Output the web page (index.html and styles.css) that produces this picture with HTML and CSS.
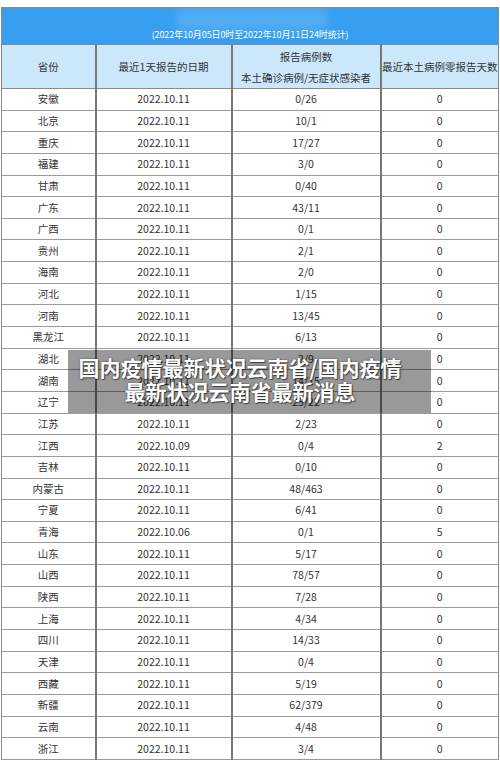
FILE: index.html
```html
<!DOCTYPE html>
<html lang="zh-CN">
<head>
<meta charset="utf-8">
<title>国内疫情最新状况云南省</title>
<link rel="stylesheet" href="styles.css">
</head>
<body>
<div class="page">
  <table class="stats">
    <colgroup>
      <col class="c1"><col class="c2"><col class="c3"><col class="c4">
    </colgroup>
    <thead>
      <tr class="title-row">
        <th colspan="4"><span class="glow"></span><span class="period">(2022年10月05日0时至2022年10月11日24时统计)</span></th>
      </tr>
      <tr class="head-row">
        <th>省份</th>
        <th>最近1天报告的日期</th>
        <th><div class="two"><span>报告病例数</span><span>本土确诊病例/无症状感染者</span></div></th>
        <th>最近本土病例零报告天数</th>
      </tr>
    </thead>
    <tbody>
      <tr><td>安徽</td><td>2022.10.11</td><td>0/26</td><td>0</td></tr>
      <tr><td>北京</td><td>2022.10.11</td><td>10/1</td><td>0</td></tr>
      <tr><td>重庆</td><td>2022.10.11</td><td>17/27</td><td>0</td></tr>
      <tr><td>福建</td><td>2022.10.11</td><td>3/0</td><td>0</td></tr>
      <tr><td>甘肃</td><td>2022.10.11</td><td>0/40</td><td>0</td></tr>
      <tr><td>广东</td><td>2022.10.11</td><td>43/11</td><td>0</td></tr>
      <tr><td>广西</td><td>2022.10.11</td><td>0/1</td><td>0</td></tr>
      <tr><td>贵州</td><td>2022.10.11</td><td>2/1</td><td>0</td></tr>
      <tr><td>海南</td><td>2022.10.11</td><td>2/0</td><td>0</td></tr>
      <tr><td>河北</td><td>2022.10.11</td><td>1/15</td><td>0</td></tr>
      <tr><td>河南</td><td>2022.10.11</td><td>13/45</td><td>0</td></tr>
      <tr><td>黑龙江</td><td>2022.10.11</td><td>6/13</td><td>0</td></tr>
      <tr><td>湖北</td><td>2022.10.11</td><td>2/9</td><td>0</td></tr>
      <tr><td>湖南</td><td>2022.10.11</td><td>14/15</td><td>0</td></tr>
      <tr><td>辽宁</td><td>2022.10.11</td><td>25/22</td><td>0</td></tr>
      <tr><td>江苏</td><td>2022.10.11</td><td>2/23</td><td>0</td></tr>
      <tr><td>江西</td><td>2022.10.09</td><td>0/4</td><td>2</td></tr>
      <tr><td>吉林</td><td>2022.10.11</td><td>0/10</td><td>0</td></tr>
      <tr><td>内蒙古</td><td>2022.10.11</td><td>48/463</td><td>0</td></tr>
      <tr><td>宁夏</td><td>2022.10.11</td><td>6/41</td><td>0</td></tr>
      <tr><td>青海</td><td>2022.10.06</td><td>0/1</td><td>5</td></tr>
      <tr><td>山东</td><td>2022.10.11</td><td>5/17</td><td>0</td></tr>
      <tr><td>山西</td><td>2022.10.11</td><td>78/57</td><td>0</td></tr>
      <tr><td>陕西</td><td>2022.10.11</td><td>7/28</td><td>0</td></tr>
      <tr><td>上海</td><td>2022.10.11</td><td>4/34</td><td>0</td></tr>
      <tr><td>四川</td><td>2022.10.11</td><td>14/33</td><td>0</td></tr>
      <tr><td>天津</td><td>2022.10.11</td><td>0/4</td><td>0</td></tr>
      <tr><td>西藏</td><td>2022.10.11</td><td>5/19</td><td>0</td></tr>
      <tr><td>新疆</td><td>2022.10.11</td><td>62/379</td><td>0</td></tr>
      <tr><td>云南</td><td>2022.10.11</td><td>4/48</td><td>0</td></tr>
      <tr><td>浙江</td><td>2022.10.11</td><td>3/4</td><td>0</td></tr>
    </tbody>
  </table>
  <div class="banner">
    <p>国内疫情最新状况云南省/国内疫情</p>
    <p>最新状况云南省最新消息</p>
  </div>
</div>
</body>
</html>
```

FILE: styles.css
```css
html, body {
  margin: 0;
  padding: 0;
  background: #ffffff;
}

.page {
  position: relative;
  width: 500px;
  height: 764px;
  padding: 7px 0 0 1px;
  box-sizing: border-box;
  font-family: "Noto Sans CJK SC", "Noto Sans", sans-serif;
  color: #333333;
}

.stats {
  width: 497px;
  border-collapse: collapse;
  table-layout: fixed;
  border: 1px solid #8a8a8a;
}

.c1 { width: 94px; }
.c2 { width: 136px; }
.c3 { width: 149px; }
.c4 { width: 118px; }

.title-row th {
  position: relative;
  height: 36px;
  padding: 0;
  background: #379ef0;
  vertical-align: bottom;
  text-align: center;
  overflow: hidden;
  border-bottom: 1px solid #7a8a99;
}

.glow {
  position: absolute;
  left: 175px;
  top: 0;
  width: 150px;
  height: 22px;
  background: #52adf3;
  filter: blur(4px);
}

.period {
  position: relative;
  display: block;
  padding-bottom: 3px;
  font-size: 9px;
  line-height: 12px;
  font-weight: normal;
  color: #ffffff;
  letter-spacing: -0.1px;
}

.head-row th {
  height: 43px;
  padding: 0;
  background: #cbe8fb;
  font-size: 10.5px;
  line-height: 13px;
  font-weight: normal;
  color: #333333;
  text-align: center;
  vertical-align: middle;
  border-left: 2px solid #777777;
  border-bottom: 1px solid #8a8a8a;
}

.head-row th:first-child {
  border-left: none;
}

.two {
  display: flex;
  flex-direction: column;
  align-items: center;
  gap: 8px;
}

.stats tbody tr {
  height: 21.65px;
}

.stats td {
  padding: 0;
  font-size: 10.5px;
  line-height: 12px;
  text-align: center;
  vertical-align: middle;
  color: #333333;
  border-left: 2px solid #777777;
  border-bottom: 1px solid #9a9a9a;
}

.stats td:first-child {
  border-left: none;
}

.banner {
  position: absolute;
  left: 68px;
  top: 350px;
  width: 363px;
  height: 63px;
  padding: 0 19px 5px 0;
  box-sizing: border-box;
  background: rgba(0, 0, 0, 0.4);
  display: flex;
  flex-direction: column;
  justify-content: center;
  align-items: center;
}

.banner p {
  margin: 0;
  font-size: 21px;
  line-height: 24px;
  font-weight: bold;
  color: #ffffff;
  white-space: nowrap;
  text-shadow: 0 0 2px rgba(0, 0, 0, 0.6), 1px 1px 1px rgba(0, 0, 0, 0.5);
}
```
